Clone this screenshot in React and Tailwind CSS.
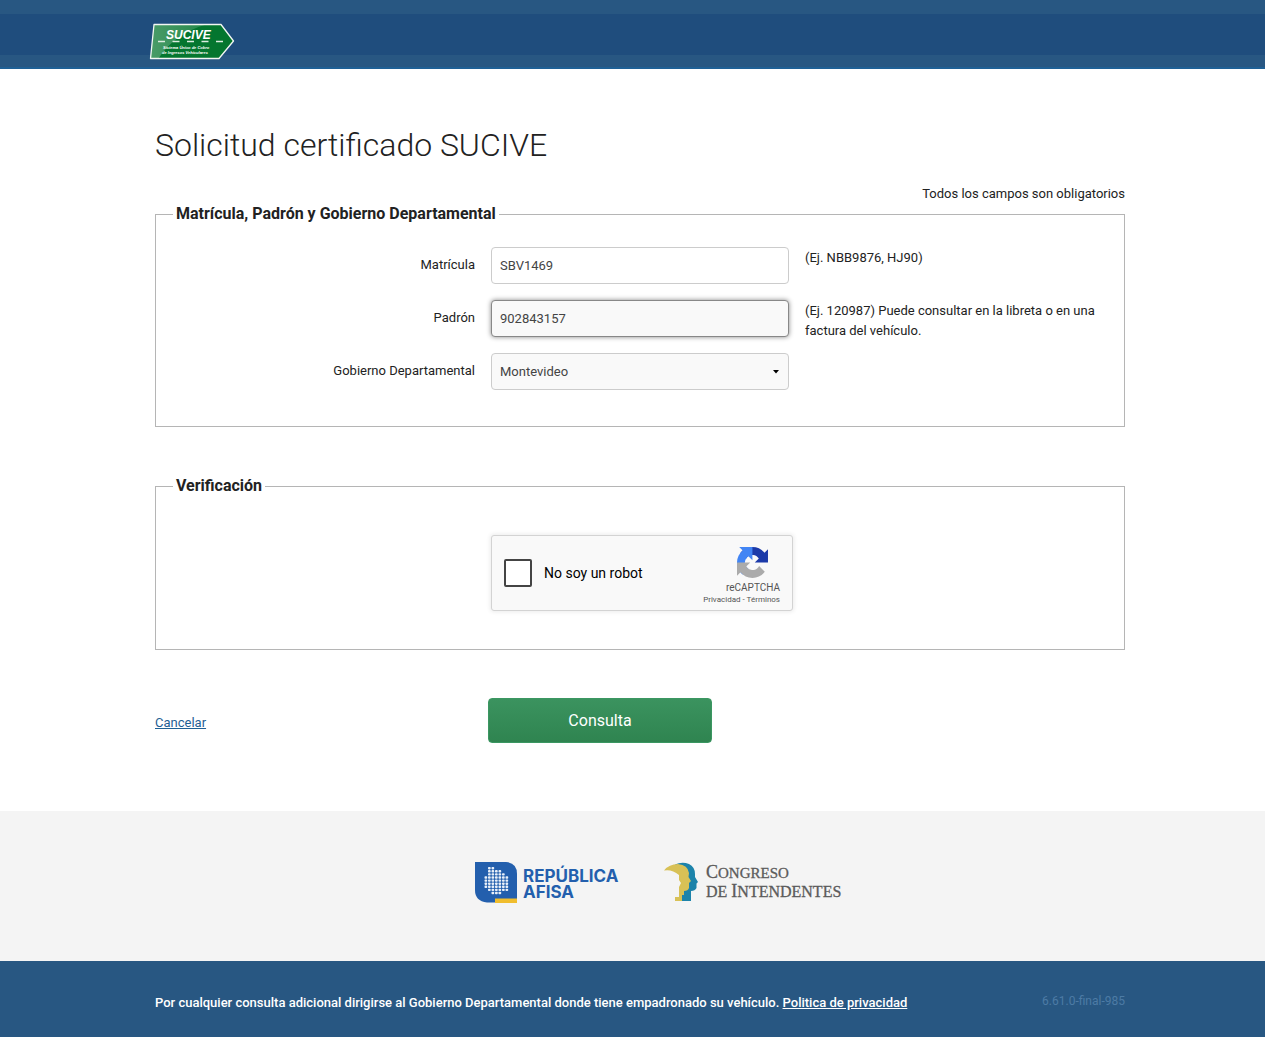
const Wrap = ({ className = "", children }) => (
  <div className={"mx-auto w-full max-w-[985px] pl-[15px] " + className}>{children}</div>
);

function SuciveLogo() {
  return (
    <svg width="86" height="38" viewBox="0 0 86 38" role="img" aria-label="SUCIVE">
      <defs>
        <clipPath id="sign"><path d="M5 1.500H72L84.500 18 70 35.500H1.500Z" /></clipPath>
        <linearGradient id="shine" x1="0" y1="0" x2="1" y2="0">
          <stop offset="0" stopColor="#fff" stopOpacity=".28" />
          <stop offset="1" stopColor="#fff" stopOpacity=".12" />
        </linearGradient>
      </defs>
      <path d="M5 1.500H72L84.500 18 70 35.500H1.500Z" fill="#04762f" />
      <path d="M0 0H62Q24 10 8 38H0Z" fill="url(#shine)" clipPath="url(#sign)" />
      <path d="M5 1.500H72L84.500 18 70 35.500H1.500Z" fill="none" stroke="#f2f7f3" strokeWidth="1.300" strokeLinejoin="round" />
      <path d="M9 18.500H78" stroke="#dcebe0" strokeWidth="1.300" strokeDasharray="7 7.500" />
      <g fill="#fff" fontFamily="'Liberation Sans',sans-serif" fontStyle="italic" fontWeight="700">
        <text x="17" y="15.500" fontSize="12">SUCIVE</text>
        <text x="14" y="26" fontSize="4">Sistema Único de Cobro</text>
        <text x="13" y="31" fontSize="4">de Ingresos Vehiculares</text>
      </g>
    </svg>
  );
}

const dotRows = [[1, 2], [1, 4], [1, 5], [0, 6], [0, 6], [0, 6], [0, 6], [1, 6], [2, 4]];

function RepublicaLogo() {
  return (
    <svg width="150" height="43" viewBox="0 0 150 43" role="img" aria-label="República AFISA">
      <path d="M1 1H32Q43 2 43 13V41.500H13Q1 40 1 29Z" fill="#235fad" />
      <rect x="21" y="37.500" width="22" height="4.500" fill="#f0bd2d" />
      {dotRows.map(([a, b], r) =>
        Array.from({ length: b - a + 1 }, (_, i) => (
          <rect key={r + "-" + i} x={10.500 + (a + i) * 3.5} y={6 + r * 3.1} width="2.700" height="2.400" rx=".8" fill="#e9f0f9" />
        ))
      )}
      <g fill="#235fad" fontFamily="Inter,sans-serif" fontWeight="700" fontSize="17">
        <text x="49" y="21">REPÚBLICA</text>
        <text x="49" y="37">AFISA</text>
      </g>
    </svg>
  );
}

function CongresoLogo() {
  return (
    <svg width="178" height="43" viewBox="0 0 178 43" role="img" aria-label="Congreso de Intendentes">
      <path d="M11 3.500Q18 .5 25 3 31 6 31 13L31 16 34 21 32.500 22.500 32.500 27Q31 30 27 30V40H18V29L20 12Z" fill="#1c83aa" />
      <path d="M0 9.500Q5 3 14 3 24 4 25 12L24.500 16 27 20 25 22 25 27Q24 30 20 30V34H18V40H11V36H15V26L17 22 15 19 15 14Q8 8 0 9.500Z" fill="#d8c156" />
      <g fill="#5b5b5b" stroke="#5b5b5b" strokeWidth=".3" fontFamily="'Liberation Serif',serif">
        <text x="42" y="17" fontSize="18">C<tspan fontSize="15">ONGRESO</tspan></text>
        <text x="42" y="36" fontSize="16">DE <tspan fontSize="18">I</tspan>NTENDENTES</text>
      </g>
    </svg>
  );
}

function RecaptchaIcon() {
  return (
    <svg className="mr-3" width="31" height="31" viewBox="0 0 64 64" aria-hidden="true">
      <path fill="#1c3aa9" d="M64 31.955l-.033-1.37V4.687l-7.16 7.16C50.948 4.674 42.033.093 32.05.093c-10.4 0-19.622 4.96-25.458 12.64l11.736 11.86a15.55 15.55 0 0 1 4.754-5.334c2.05-1.6 4.952-2.906 8.968-2.906.485 0 .86.057 1.135.163 4.976.393 9.288 3.14 11.828 7.124l-8.307 8.307L64 31.953" />
      <path fill="#4285f4" d="M31.862.094l-1.37.033H4.594l7.16 7.16C4.58 13.147 0 22.06 0 32.046c0 10.4 4.96 19.622 12.64 25.458L24.5 45.768a15.55 15.55 0 0 1-5.334-4.754c-1.6-2.05-2.906-4.952-2.906-8.968 0-.485.057-.86.163-1.135.393-4.976 3.14-9.288 7.124-11.828l8.307 8.307L31.86.095" />
      <path fill="#ababab" d="M.001 32.045l.033 1.37v25.898l7.16-7.16c5.86 7.173 14.774 11.754 24.76 11.754 10.4 0 19.622-4.96 25.458-12.64l-11.736-11.86a15.55 15.55 0 0 1-4.754 5.334c-2.05 1.6-4.952 2.906-8.968 2.906-.485 0-.86-.057-1.135-.163-4.976-.393-9.288-3.14-11.828-7.124l8.307-8.307c-10.522.04-22.4.066-27.295-.005" />
    </svg>
  );
}

const field = "h-[37px] w-full rounded border px-2 text-[#444] outline-none";

function Row({ id, label, hint, children }) {
  return (
    <div className="grid min-h-[41px] grid-cols-[319fr_298fr_303fr] gap-4 pr-4">
      <label htmlFor={id} className="pt-2 text-right">{label}</label>
      <div>{children}</div>
      <p id={id + "-hint"} className="pt-px">{hint}</p>
    </div>
  );
}

export default function App() {
  return (
    <div className="min-h-screen bg-white font-[Roboto,sans-serif] text-[13px] leading-5 text-[#222]">
      <header className="border-b-2 border-[#1f6095] bg-[#285782]">
        <div className="bg-[linear-gradient(to_bottom,#285782_14px,#1f4d7d_14px,#1f4d7d_55px,#285782_55px)] pt-[23px] pb-[6px]">
          <Wrap>
            <a href="#inicio" className="-ml-1.5 block w-fit"><SuciveLogo /></a>
          </Wrap>
        </div>
      </header>

      <main>
        <Wrap>
          <form onSubmit={(e) => e.preventDefault()} className="pt-14 pb-[68px]">
            <h1 className="text-[32px] leading-10 font-light">Solicitud certificado SUCIVE</h1>
            <p className="mt-[19px] text-right">Todos los campos son obligatorios</p>

            <fieldset className="border border-[#b5b5b5] px-0 pb-8">
              <legend className="ml-[17px] px-[3px] text-base leading-5 font-bold">Matrícula, Padrón y Gobierno Departamental</legend>
              <div className="flex flex-col gap-3 pt-[23px]">
                <Row id="matricula" label="Matrícula" hint="(Ej. NBB9876, HJ90)">
                  <input id="matricula" aria-describedby="matricula-hint" defaultValue="SBV1469" className={field + " border-[#ccc] bg-white"} />
                </Row>
                <Row id="padron" label="Padrón" hint="(Ej. 120987) Puede consultar en la libreta o en una factura del vehículo.">
                  <input id="padron" aria-describedby="padron-hint" defaultValue="902843157" className={field + " border-[#888] bg-[#f9f9f9] shadow-[0_0_5px_#888]"} />
                </Row>
                <Row id="gobierno" label="Gobierno Departamental">
                  <div className="relative">
                    <select id="gobierno" className={field + " appearance-none border-[#ccc] bg-[#f9f9f9]"}>
                      <option>Montevideo</option>
                    </select>
                    <svg className="pointer-events-none absolute top-[17px] right-[10px]" width="6" height="4" viewBox="0 0 6 4" aria-hidden="true">
                      <path d="M0 0H6L3 3.500Z" fill="#000" />
                    </svg>
                  </div>
                </Row>
              </div>
            </fieldset>

            <fieldset className="mt-[49px] border border-[#b5b5b5] pb-[38px]">
              <legend className="ml-[17px] px-[3px] text-base leading-5 font-bold">Verificación</legend>
              <div className="grid grid-cols-[319fr_617fr] gap-4 pt-[39px] pr-4">
                <div className="col-start-2 flex h-[76px] w-[302px] items-center rounded-[3px] border border-[#d3d3d3] bg-[#f9f9f9] pl-3 text-black shadow-[0_0_4px_1px_rgba(0,0,0,0.08)]">
                  <input id="robot" type="checkbox" className="size-7 appearance-none rounded-[2px] border-2 border-[#444] bg-white" />
                  <label htmlFor="robot" className="flex-1 pl-3 text-sm">No soy un robot</label>
                  <div className="flex flex-col items-end pt-1.5 pr-3 text-[#555]">
                    <RecaptchaIcon />
                    <div className="pt-1 text-[10px] leading-3">reCAPTCHA</div>
                    <div className="text-[8px] leading-3"><a href="#privacidad">Privacidad</a> - <a href="#terminos">Términos</a></div>
                  </div>
                </div>
              </div>
            </fieldset>

            <div className="mt-12 flex items-center">
              <a href="#cancelar" className="w-[333px] pt-1 text-[#1f6095] underline">Cancelar</a>
              <button type="submit" className="h-[45px] w-56 rounded border border-[#3b9762] bg-linear-to-b from-[#3b935f] to-[#2f8450] text-base text-white">Consulta</button>
            </div>
          </form>
        </Wrap>
      </main>

      <footer>
        <div className="flex h-[150px] items-center justify-center gap-10 bg-[#f4f4f4] pb-2 pl-[51px]">
          <RepublicaLogo />
          <CongresoLogo />
        </div>
        <div className="bg-[#285782] pt-8 pb-6">
          <Wrap className="flex justify-between">
            <p className="font-medium text-white">
              Por cualquier consulta adicional dirigirse al Gobierno Departamental donde tiene empadronado su vehículo.{" "}
              <a href="#politica" className="underline">Politica de privacidad</a>
            </p>
            <span className="text-xs leading-4 text-[#4d7ba5]">6.61.0-final-985</span>
          </Wrap>
        </div>
      </footer>
    </div>
  );
}
